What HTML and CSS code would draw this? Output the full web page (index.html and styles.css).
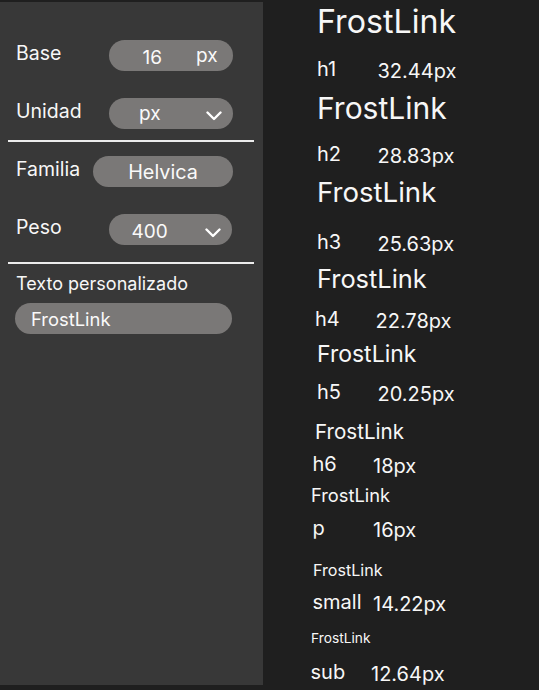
FILE: index.html
```html
<!DOCTYPE html>
<html lang="es">
<head>
<meta charset="utf-8">
<title>FrostLink – escala tipográfica</title>
<link rel="stylesheet" href="styles.css">
</head>
<body>
<div class="app">
  <aside class="panel">
    <div class="field field-base">
      <span class="field-label">Base</span>
      <div class="pill pill-base"><span class="pill-num">16</span><span class="pill-unit">px</span></div>
    </div>
    <div class="field field-unit">
      <span class="field-label">Unidad</span>
      <div class="pill pill-select pill-unitsel"><span class="pill-value">px</span>
        <svg class="chev" viewBox="0 0 16 10" width="16" height="10"><polyline points="1.5,1.5 8,8 14.5,1.5"/></svg>
      </div>
    </div>
    <div class="divider"></div>
    <div class="field field-family">
      <span class="field-label">Familia</span>
      <div class="pill pill-family"><span class="pill-value">Helvica</span></div>
    </div>
    <div class="field field-weight">
      <span class="field-label">Peso</span>
      <div class="pill pill-select pill-weight"><span class="pill-value pill-num">400</span>
        <svg class="chev" viewBox="0 0 16 10" width="16" height="10"><polyline points="1.5,1.5 8,8 14.5,1.5"/></svg>
      </div>
    </div>
    <div class="divider divider-2"></div>
    <div class="custom-label">Texto personalizado</div>
    <div class="pill pill-input"><span class="pill-value">FrostLink</span></div>
  </aside>

  <main class="preview">
    <section class="sample s-h1">
      <div class="sample-title">FrostLink</div>
      <div class="sample-meta"><span class="meta-tag">h1</span><span class="meta-size">32.44px</span></div>
    </section>
    <section class="sample s-h2">
      <div class="sample-title">FrostLink</div>
      <div class="sample-meta"><span class="meta-tag">h2</span><span class="meta-size">28.83px</span></div>
    </section>
    <section class="sample s-h3">
      <div class="sample-title">FrostLink</div>
      <div class="sample-meta"><span class="meta-tag">h3</span><span class="meta-size">25.63px</span></div>
    </section>
    <section class="sample s-h4">
      <div class="sample-title">FrostLink</div>
      <div class="sample-meta"><span class="meta-tag">h4</span><span class="meta-size">22.78px</span></div>
    </section>
    <section class="sample s-h5">
      <div class="sample-title">FrostLink</div>
      <div class="sample-meta"><span class="meta-tag">h5</span><span class="meta-size">20.25px</span></div>
    </section>
    <section class="sample s-h6">
      <div class="sample-title">FrostLink</div>
      <div class="sample-meta"><span class="meta-tag">h6</span><span class="meta-size">18px</span></div>
    </section>
    <section class="sample s-p">
      <div class="sample-title">FrostLink</div>
      <div class="sample-meta"><span class="meta-tag">p</span><span class="meta-size">16px</span></div>
    </section>
    <section class="sample s-small">
      <div class="sample-title">FrostLink</div>
      <div class="sample-meta"><span class="meta-tag">small</span><span class="meta-size">14.22px</span></div>
    </section>
    <section class="sample s-sub">
      <div class="sample-title">FrostLink</div>
      <div class="sample-meta"><span class="meta-tag">sub</span><span class="meta-size">12.64px</span></div>
    </section>
  </main>
</div>
</body>
</html>
```

FILE: styles.css
```css
* { box-sizing: border-box; }

html, body {
  margin: 0;
  padding: 0;
  background: #1f1f1f;
}

body {
  font-family: Inter, "Noto Sans", "Liberation Sans", sans-serif;
  color: #f7f7f7;
  width: 539px;
  height: 690px;
  overflow: hidden;
}

.app {
  display: flex;
  height: 690px;
}

/* ---------- left panel ---------- */
.panel {
  width: 263px;
  flex: none;
  margin-top: 2px;
  height: 683px;
  background: #383838;
  padding-top: 38px;
  display: flex;
  flex-direction: column;
}

.field {
  display: flex;
  align-items: center;
  height: 31px;
  padding: 0 30px 0 16px;
}

.field-unit { margin-top: 27px; }
.field-family { margin-top: 14px; }
.field-weight { margin-top: 27px; padding-right: 31px; }

.field-label {
  font-size: 19.5px;
  margin-bottom: 6px;
}

.divider {
  height: 2px;
  background: #ececec;
  margin: 11px 9px 0 8px;
}

.divider-2 { margin-top: 17px; }

.pill {
  margin-left: auto;
  height: 31px;
  border-radius: 16px;
  background: #7a7877;
  display: flex;
  align-items: center;
  font-size: 19px;
  color: #fafafa;
}

.pill-base {
  width: 124px;
  padding-left: 33.5px;
}

.pill-num { margin-top: 4px; }

.pill-unit { margin-left: 34px; }

.pill-select {
  width: 124px;
  justify-content: space-between;
  padding-right: 11px;
}

.pill-unitsel { padding-left: 30px; }
.pill-unitsel .chev { margin-top: 4px; }

.pill-weight { width: 123px; padding-left: 22.5px; }
.pill-weight .chev { margin-top: 6px; }

.pill-family {
  width: 140px;
  justify-content: center;
  font-size: 19.8px;
}

.chev {
  fill: none;
  stroke: #ffffff;
  stroke-width: 2.4;
  stroke-linecap: round;
  stroke-linejoin: round;
}

.custom-label {
  font-size: 18px;
  line-height: 20px;
  margin: 10px 0 0 16px;
}

.pill-input {
  margin: 9px 31px 0 15px;
  padding-left: 16px;
  font-size: 18.4px;
}

/* ---------- right preview ---------- */
.preview {
  flex: 1;
  display: flex;
  flex-direction: column;
  padding-left: 54px;
}

.sample {
  display: flex;
  flex-direction: column;
}

.sample-title {
  font-size: var(--fs);
  line-height: 1.2;
  margin-top: var(--tmt);
  margin-left: var(--tml, 0px);
}

.sample-meta {
  display: flex;
  align-items: flex-start;
  height: 24px;
  line-height: 24px;
  font-size: 20px;
  margin-top: var(--mmt);
  margin-left: var(--mml, 0px);
}

.meta-tag {
  width: 60.5px;
  flex: none;
}

.meta-size { padding-top: 2px; }

.s-h1 { --fs: 32.2px; --tmt: 2.5px; --mmt: 16px; }
.s-h2 { --fs: 30px; --tmt: 8.5px; --mmt: 16.5px; }
.s-h3 { --fs: 27.6px; --tmt: 10.2px; --mmt: 20.7px; }
.s-h4 { --fs: 25.4px; --tmt: 9.9px; --mmt: 12.6px; --mml: -2px; }
.s-h5 { --fs: 23px; --tmt: 10.2px; --mmt: 11.5px; }
.s-h6 { --fs: 20.6px; --tmt: 15.2px; --mmt: 7.5px; --tml: -2px; --mml: -4.5px; }
.s-p { --fs: 18.3px; --tmt: 9.5px; --mmt: 8.8px; --tml: -6px; --mml: -4.5px; }
.s-small { --fs: 16.1px; --tmt: 21.3px; --mmt: 9.7px; --tml: -4px; --mml: -4.5px; }
.s-sub { --fs: 13.75px; --tmt: 15.8px; --mmt: 13.4px; --tml: -6px; --mml: -6.5px; }
```
